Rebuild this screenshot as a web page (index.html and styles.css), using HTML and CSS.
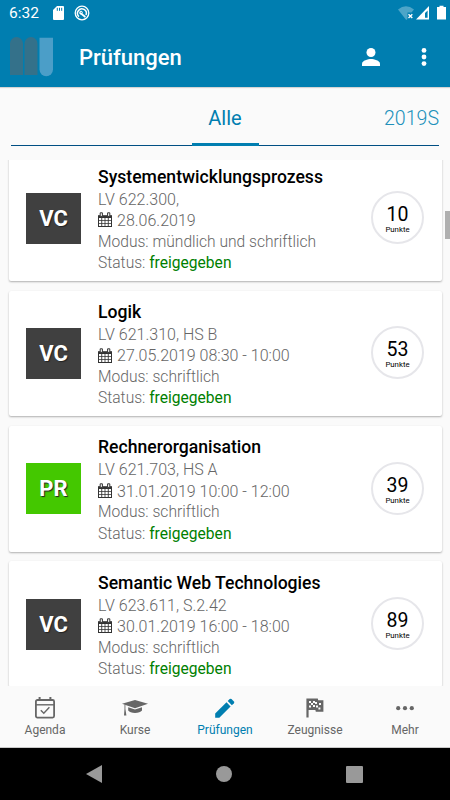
FILE: index.html
```html
<!DOCTYPE html>
<html lang="de">
<head>
    <meta charset="UTF-8">
    <meta name="viewport" content="width=device-width, initial-scale=1.0">
    <title>Prüfungen</title>
    <link rel="stylesheet" href="styles.css">
</head>
<body>
    <svg width="0" height="0" class="symbols">
        <symbol id="calendar" viewBox="0 0 14 15">
            <path d="M0 3.2h14V15H0z" fill="#333"/>
            <path d="M1 6h2.3v2.2H1zM4.2 6h2.4v2.2H4.2zM7.4 6h2.4v2.2H7.4zM10.7 6H13v2.2h-2.3zM1 9h2.3v2.2H1zM4.2 9h2.4v2.2H4.2zM7.4 9h2.4v2.2H7.4zM10.7 9H13v2.2h-2.3zM1 12h2.3v2H1zM4.2 12h2.4v2H4.2zM7.4 12h2.4v2H7.4zM10.7 12H13v2h-2.3z" fill="#fff"/>
            <path d="M2.2.8h2.2v3.6H2.2zM9.6.8h2.2v3.6H9.6z" fill="#fff" stroke="#333" stroke-width="1"/>
        </symbol>
    </svg>

    <header>
        <div class="status-bar">
            <span class="clock">6:32</span>
            <svg class="sd" width="11" height="14" viewBox="0 0 11 14"><path d="M4 0h6a1 1 0 0 1 1 1v12a1 1 0 0 1-1 1H1a1 1 0 0 1-1-1V4z" fill="#fff"/><path d="M4.3 1.8v3M6.5 1.8v3M8.7 1.8v3" stroke="#007eb0"/></svg>
            <svg class="sync" width="16" height="16" viewBox="0 0 16 16" fill="none" stroke="#fff"><circle cx="8" cy="8" r="6.8" stroke-width="1.3"/><path d="M5 11.6A4.4 4.4 0 1 1 12 10" stroke-width="1.5"/><path d="M6 7.8l5.4 4.2" stroke-width="1.8"/><circle cx="7" cy="7.6" r="1.4" stroke-width="1"/></svg>
            <svg class="signals" width="50" height="16" viewBox="0 0 50 16">
                <path d="M0 4.5Q8 -2 16 4.5L13.5 7.6H9.5V14L8.2 15z" fill="#4da5c8"/>
                <path d="M10.5 9.3l3.8 3.8M14.3 9.3l-3.8 3.8" stroke="#fff" stroke-width="1.4"/>
                <path d="M18 14.4L31 1v13.4z" fill="#fff"/><path d="M27 8l2.6-2.6v7.4H27z" fill="#007eb0"/>
                <path d="M39 2h2.5V.7h4V2H48v12.6h-9z" fill="#fff"/>
            </svg>
        </div>
        <div class="toolbar">
            <svg class="logo" width="44" height="40" viewBox="0 0 44 40">
                <path d="M0 38V6.5a6.5 6.5 0 0 1 13 0V38zM14.5 38V6.5a6.5 6.5 0 0 1 13 0V38z" fill="#34718a"/>
                <path d="M29.5 .8H43V32.6a6.75 6.75 0 0 1-13.5 0z" fill="#4b9ec8"/>
            </svg>
            <h1>Prüfungen</h1>
            <svg class="person" width="18" height="18" viewBox="0 0 18 18" fill="#fff"><circle cx="9" cy="4.5" r="4.5"/><path d="M0 18v-2.3C0 12.6 6 11 9 11s9 1.6 9 4.7V18z"/></svg>
            <svg class="menu" width="6" height="18" viewBox="0 0 6 18" fill="#fff"><circle cx="3" cy="2.4" r="2.4"/><circle cx="3" cy="9" r="2.4"/><circle cx="3" cy="15.6" r="2.4"/></svg>
        </div>
    </header>

    <nav class="tabs">
        <a class="tab active">Alle</a>
        <a class="tab next">2019S</a>
    </nav>

    <main>
        <div class="exam">
            <div class="type">VC</div>
            <div class="info">
                <h2>Systementwicklungsprozess</h2>
                <div>LV 622.300,</div>
                <div class="date"><svg width="14" height="15"><use href="#calendar"/></svg>28.06.2019</div>
                <div class="detail">Modus: mündlich und schriftlich</div>
                <div class="detail">Status: <span class="ok">freigegeben</span></div>
            </div>
            <div class="points"><b>10</b><span>Punkte</span></div>
        </div>
        <div class="exam">
            <div class="type">VC</div>
            <div class="info">
                <h2>Logik</h2>
                <div>LV 621.310, HS B</div>
                <div class="date"><svg width="14" height="15"><use href="#calendar"/></svg>27.05.2019 08:30 - 10:00</div>
                <div class="detail">Modus: schriftlich</div>
                <div class="detail">Status: <span class="ok">freigegeben</span></div>
            </div>
            <div class="points"><b>53</b><span>Punkte</span></div>
        </div>
        <div class="exam">
            <div class="type pr">PR</div>
            <div class="info">
                <h2>Rechnerorganisation</h2>
                <div>LV 621.703, HS A</div>
                <div class="date"><svg width="14" height="15"><use href="#calendar"/></svg>31.01.2019 10:00 - 12:00</div>
                <div class="detail">Modus: schriftlich</div>
                <div class="detail">Status: <span class="ok">freigegeben</span></div>
            </div>
            <div class="points"><b>39</b><span>Punkte</span></div>
        </div>
        <div class="exam">
            <div class="type">VC</div>
            <div class="info">
                <h2>Semantic Web Technologies</h2>
                <div>LV 623.611, S.2.42</div>
                <div class="date"><svg width="14" height="15"><use href="#calendar"/></svg>30.01.2019 16:00 - 18:00</div>
                <div class="detail">Modus: schriftlich</div>
                <div class="detail">Status: <span class="ok">freigegeben</span></div>
            </div>
            <div class="points"><b>89</b><span>Punkte</span></div>
        </div>
    </main>
    <div class="scrollbar"></div>

    <nav class="bottom-nav">
        <a>
            <svg width="26" height="24" viewBox="0 0 26 24" fill="none" stroke="#666"><rect x="3.9" y="4" width="18.2" height="17.6" rx="1.5" stroke-width="1.8"/><path d="M4 8.8h18" stroke-width="1.4"/><path d="M7.6 1v3M18.4 1v3" stroke-width="2"/><path d="M8.8 14.2l3 3 5.6-6" stroke-width="1.4"/></svg>
            Agenda
        </a>
        <a>
            <svg width="26" height="24" viewBox="0 0 26 24" fill="#666"><path d="M0 7.8L13 4l13 3.8-13 4.4z"/><path d="M6.2 11.2l6.8 2.2 7-2.2v3.4q-2 2.4-7 2.4t-6.8-2.4z"/><path d="M3.4 9v4l1 6.5H2l.5-6.5V8.2z"/></svg>
            Kurse
        </a>
        <a class="active">
            <svg width="26" height="24" viewBox="0 0 26 24" fill="#007eb0"><path d="M3.2 17.6L14.5 6.3l4.1 4.1L7.3 21.7H3.2z"/><path d="M15.7 5.1l2-2q.9-.8 1.8 0l2.4 2.4q.8.9 0 1.8l-2 2z"/></svg>
            Prüfungen
        </a>
        <a>
            <svg width="26" height="24" viewBox="0 0 26 24" fill="#666"><path d="M4.4 2.6h11.4l.4 1.6h5.2v11.6h-7.6l-.4-1.8H6.6v7.6H4.4z"/><path d="M7 5h2v2H7zM11 5h2v2h-2zM9 7h2v2H9zM13 6h2v2h-2zM7 9.4h2v2H7zM11 9h2v2h-2zM14 9.6h2v2h-2zM17 7h2v2h-2zM16.4 11.6h2v2h-2z" fill="#fafafa"/></svg>
            Zeugnisse
        </a>
        <a>
            <svg width="26" height="24" viewBox="0 0 26 24" fill="#666"><circle cx="6.2" cy="12.2" r="2.1"/><circle cx="13" cy="12.2" r="2.1"/><circle cx="19.8" cy="12.2" r="2.1"/></svg>
            Mehr
        </a>
    </nav>

    <footer>
        <svg width="16" height="18" viewBox="0 0 16 18" fill="#999"><path d="M0 9L16 0v18z"/></svg>
        <svg width="16" height="16" viewBox="0 0 16 16" fill="#999"><circle cx="8" cy="8" r="8"/></svg>
        <svg width="17" height="17" viewBox="0 0 17 17" fill="#999"><rect width="17" height="17" rx="1"/></svg>
    </footer>
</body>
</html>
```
FILE: styles.css
```css
* {
    box-sizing: border-box;
}

body {
    margin: 0;
    height: 800px;
    display: flex;
    flex-direction: column;
    position: relative;
    overflow: hidden;
    background: #fafafa;
    font-family: Roboto, sans-serif;
    color: #666;
}

svg {
    display: block;
    flex: none;
}

.symbols {
    position: absolute;
}

header {
    height: 87px;
    background: #007eb0;
    color: #fff;
    box-shadow: 0 1px 1px rgba(0, 0, 0, 0.15);
}

.status-bar {
    display: flex;
    align-items: center;
    height: 26px;
    padding: 0 8px 0 9px;
}

.clock {
    width: 44px;
    font-size: 15.5px;
}

.sync {
    margin-left: 10px;
}

.signals {
    width: 50px;
    margin-left: auto;
    margin-right: -6px;
}

.toolbar {
    display: flex;
    align-items: center;
    height: 61px;
    padding: 0 23.5px 0 9.5px;
}

h1 {
    flex: 1;
    margin: 1px 0 0 25.5px;
    font-size: 22px;
    font-weight: 500;
}

.menu {
    margin-left: 40.5px;
}

.tabs {
    display: grid;
    grid-template-columns: 180.5px 67px 1fr;
    height: 59px;
    margin: 0 11px;
    border-bottom: 1px solid #004f83;
    font-size: 20px;
    line-height: 62px;
}

.tab.active {
    grid-column: 2;
    height: 59px;
    text-align: center;
    color: #007eb0;
    border-bottom: 3px solid #007eb0;
}

.tab.next {
    text-align: right;
    font-size: 19.6px;
    font-weight: 300;
    line-height: 63px;
    color: #2090ba;
}

main {
    height: 526px;
    margin-top: 14px;
    padding: 0 8.5px;
    overflow: hidden;
}

.exam {
    display: flex;
    align-items: center;
    height: 125.6px;
    margin-bottom: 9.8px;
    padding: 0 17.5px;
    background: #fff;
    border-radius: 2px;
    box-shadow: 0 1px 2px rgba(0, 0, 0, 0.3);
}

.exam:first-child {
    margin-top: -4.8px;
}

.type {
    width: 55px;
    height: 51px;
    background: #404040;
    color: #fff;
    font-size: 22px;
    font-weight: 700;
    line-height: 52px;
    text-align: center;
    text-shadow: 1px 1px 1px #222;
}

.type.pr {
    background: #44c800;
}

.info {
    flex: 1;
    margin: 4px 0 0 17px;
    font-size: 16px;
    font-weight: 300;
    line-height: 21.4px;
    white-space: nowrap;
}

h2 {
    margin: 0;
    font-size: 17.6px;
    font-weight: 500;
    line-height: 23px;
    color: #000;
}

.date {
    display: flex;
    align-items: center;
    gap: 5px;
}

.date svg {
    margin-top: -2px;
}

.detail {
    font-size: 15.6px;
}

.ok {
    color: #008000;
    font-weight: 400;
}

.points {
    display: flex;
    flex-direction: column;
    align-items: center;
    width: 53px;
    height: 53px;
    margin-top: -1px;
    padding-top: 12px;
    border: 2px solid #e6e6ea;
    border-radius: 50%;
    color: #000;
}

.points b {
    font-size: 19.5px;
    font-weight: 400;
    line-height: 20px;
}

.points span {
    font-size: 7.8px;
    line-height: 10px;
}

.scrollbar {
    position: absolute;
    right: 0;
    top: 211px;
    width: 5px;
    height: 28px;
    background: #b0b0b0;
}

.bottom-nav {
    display: grid;
    grid-template-columns: repeat(5, 1fr);
    height: 62px;
    border-bottom: 1px solid #c8c8c8;
    font-size: 12px;
}

.bottom-nav a {
    display: flex;
    flex-direction: column;
    align-items: center;
    gap: 3px;
    padding-top: 10px;
}

.bottom-nav .active {
    color: #007eb0;
}

footer {
    display: flex;
    align-items: center;
    justify-content: space-between;
    flex: 1;
    padding: 0 87px 0 86px;
    background: #000;
}
```
